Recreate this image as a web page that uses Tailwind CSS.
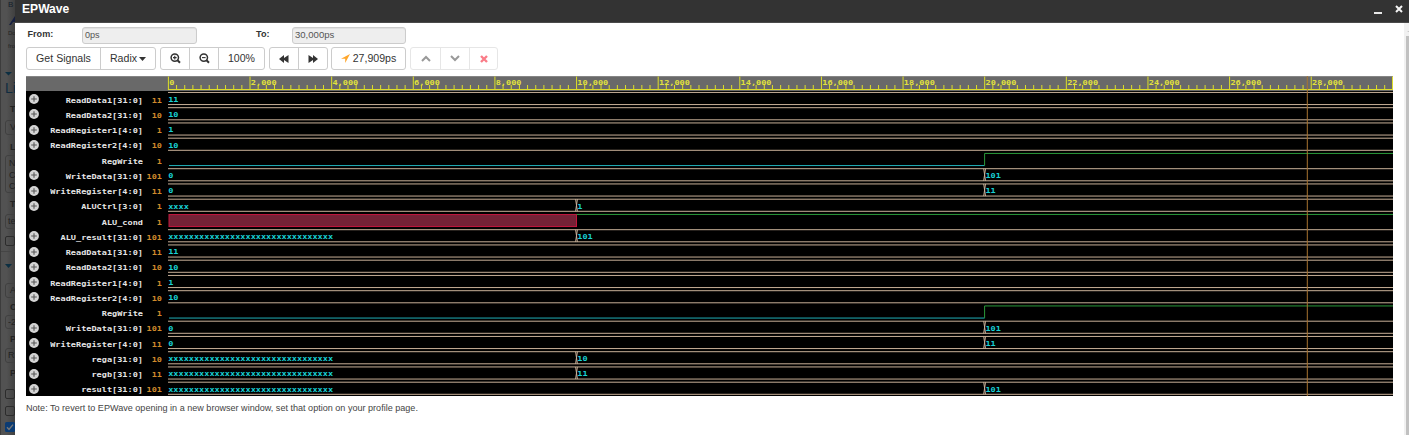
<!DOCTYPE html>
<html lang="en">
<head>
<meta charset="utf-8">
<title>EPWave</title>
<script src="https://cdn.jsdelivr.net/npm/@tailwindcss/browser@4"></script>
</head>
<body class="w-[1409px] h-[435px] overflow-hidden bg-white flex font-['Liberation_Sans',sans-serif] text-[#333]">

<!-- dimmed page behind the dialog -->
<aside class="w-[15px] h-[435px] shrink-0 overflow-hidden bg-linear-to-r from-[#525252] from-40% to-[#404040] border-l border-[#3c3c3c] text-[9px] leading-none text-[#222] whitespace-nowrap">
  <div class="h-[12px] pl-[7px] pt-px text-[8px] text-[#14202c]">B</div>
  <svg class="block ml-[8px] mt-[3px]" width="8" height="12"><path d="M0 10 6 1 9 1 9 7 4 7 2 10z" fill="#161f40"/></svg>
  <div class="h-[12px] pl-[7px] pt-[3px] text-[6px]">Do</div>
  <div class="h-[32px] pl-[7px] pt-[4px] text-[6px]">fro</div>
  <svg class="block ml-[4px]" width="8" height="5"><path d="M0 1H7L3.5 4.5z" fill="#0c2f42"/></svg>
  <div class="h-[28px] pl-[4px] pt-[5px] text-[14px] text-[#102c40]">Li</div>
  <div class="h-[16px] pl-[9px] pt-px font-bold">T</div>
  <div class="h-[15px] ml-[4px] w-[20px] rounded-[3px] border border-[#404040] pl-[4px] pt-[2px]">V</div>
  <div class="h-[20px] pl-[9px] pt-[8px] font-bold">L</div>
  <div class="h-[38px] ml-[4px] w-[20px] rounded-[3px] border border-[#404040] pl-[3px] pt-[2px] leading-[11.5px]">N<br>C<br>C</div>
  <div class="h-[21px] pl-[9px] pt-[7px] font-bold">T</div>
  <div class="h-[15px] ml-[4px] w-[20px] rounded-[3px] border border-[#404040] pl-[2px] pt-[2px]">te</div>
  <div class="mt-[7px] ml-[4px] size-[10px] rounded-[2px] border border-[#2c2c2c]"></div>
  <div class="mt-[5px] h-[13px] border-t border-[#454545]"></div>
  <svg class="block ml-[4px]" width="8" height="5"><path d="M0 0H7L3.5 4z" fill="#0c2f42"/></svg>
  <div class="mt-[14px] h-[15px] ml-[4px] w-[20px] rounded-[3px] border border-[#404040] pl-[4px] pt-[2px]">A</div>
  <div class="h-[17px] pl-[9px] pt-[5px] font-bold">C</div>
  <div class="h-[14px] ml-[4px] w-[20px] rounded-[3px] border border-[#404040] pl-[2px] pt-[2px]">-2</div>
  <div class="h-[19px] pl-[9px] pt-[6px] font-bold">P</div>
  <div class="h-[15px] ml-[4px] w-[20px] rounded-[3px] border border-[#404040] pl-[2px] pt-[2px]">R</div>
  <div class="h-[26px] pl-[9px] pt-[6px] font-bold">P</div>
  <div class="ml-[4px] size-[10px] rounded-[2px] border border-[#2c2c2c]"></div>
  <div class="mt-[7px] ml-[4px] size-[10px] rounded-[2px] border border-[#2c2c2c]"></div>
  <svg class="block mt-[6px] ml-[4px]" width="10" height="10"><rect width="10" height="10" rx="1.5" fill="#0b3b73"/><path d="M2 5.2 4 7.4 8 2.6" stroke="#777" stroke-width="1.4" fill="none"/></svg>
</aside>

<section class="w-[1394px] h-[435px] shrink-0 flex flex-col">
  <header class="h-[23px] shrink-0 bg-[#333] border-b border-[#4a4a4a] flex items-start justify-between pl-[7px] pr-[6px] text-white">
    <h1 class="text-[12.1px] font-bold leading-[18px]">EPWave</h1>
    <div class="flex gap-[13px]">
      <svg width="8" height="15"><path d="M0 13H8" stroke="#e8e8e8" stroke-width="2"/></svg>
      <svg width="8" height="15"><path d="M1 6 7 12M7 6 1 12" stroke="#f4f4f4" stroke-width="2"/></svg>
    </div>
  </header>

  <div class="flex flex-1 min-h-0">
    <main class="flex-1 pl-[11px] pt-[4px]">
      <div class="flex items-center h-[16px] text-[9.1px]">
        <label class="w-[56px] pl-[1.5px] font-bold">From:</label>
        <div class="w-[115px] h-[17px] rounded-[3px] border border-[#ccc] bg-[#eee] shadow-[inset_0_1px_1px_#0001] pl-[2px] leading-[15px] text-[#555]">0ps</div>
        <label class="ml-[59px] w-[36px] font-bold">To:</label>
        <div class="w-[114px] h-[17px] rounded-[3px] border border-[#ccc] bg-[#eee] shadow-[inset_0_1px_1px_#0001] pl-[2px] leading-[15px] text-[#555]"><span class="inline-block origin-left scale-x-105">30,000ps</span></div>
      </div>

      <div class="mt-[4px] flex h-[23px] text-[10.6px] leading-[21px]">
        <div class="flex w-[130px] rounded-[3px] border border-[#ccc] divide-x divide-[#ccc]">
          <div class="w-[74px] text-center"><span class="inline-block scale-y-110">Get Signals</span></div>
          <div class="flex-1 flex items-center justify-center gap-[2px]"><span class="inline-block scale-y-110">Radix</span><svg width="7" height="4"><path d="M0 0H7L3.5 4z" fill="#333"/></svg></div>
        </div>
        <div class="ml-[4px] flex w-[105px] rounded-[3px] border border-[#ccc] divide-x divide-[#ccc]">
          <div class="w-[29px] flex items-center justify-center"><svg width="11" height="11"><circle cx="4.8" cy="4.6" r="3.7" fill="none" stroke="#333" stroke-width="1.5"/><path d="M7.5 7.3 10 9.8" stroke="#333" stroke-width="2"/><path d="M3 4.6H6.6M4.8 2.8V6.4" stroke="#333" stroke-width="1.1"/></svg></div>
          <div class="w-[29px] flex items-center justify-center"><svg width="11" height="11"><circle cx="4.8" cy="4.6" r="3.7" fill="none" stroke="#333" stroke-width="1.5"/><path d="M7.5 7.3 10 9.8" stroke="#333" stroke-width="2"/><path d="M3 4.6H6.6" stroke="#333" stroke-width="1.1"/></svg></div>
          <div class="flex-1 text-center"><span class="inline-block scale-y-110">100%</span></div>
        </div>
        <div class="ml-[4px] flex w-[59px] rounded-[3px] border border-[#ccc] divide-x divide-[#ccc]">
          <div class="flex-1 flex items-center justify-center"><svg width="10" height="8"><path d="M0 4 5 0V3L9.5 0V8L5 5V8z" fill="#333"/></svg></div>
          <div class="flex-1 flex items-center justify-center"><svg width="10" height="8"><path d="M10 4 5 0V3L.5 0V8L5 5V8z" fill="#333"/></svg></div>
        </div>
        <div class="ml-[3px] flex w-[75px] items-center justify-center gap-[3px] rounded-[3px] border border-[#ccc]"><svg width="9" height="9"><path d="M9 0 0 4.8H4.2V9z" fill="#ffa62b"/></svg><span class="inline-block scale-y-110">27,909ps</span></div>
        <div class="ml-[4px] flex w-[88px] rounded-[3px] border border-[#e6e6e6] divide-x divide-[#e6e6e6]">
          <div class="w-[30px] flex items-center justify-center"><svg width="10" height="7"><path d="M1 6 5 2 9 6" stroke="#999" stroke-width="2" fill="none"/></svg></div>
          <div class="w-[29px] flex items-center justify-center"><svg width="10" height="7"><path d="M1 1 5 5 9 1" stroke="#999" stroke-width="2" fill="none"/></svg></div>
          <div class="flex-1 flex items-center justify-center"><svg width="8" height="8"><path d="M1 1 7 7M7 1 1 7" stroke="#fa7c88" stroke-width="2.4"/></svg></div>
        </div>
      </div>

      <div class="mt-[6px] w-[1367px] h-[320px] bg-black flex flex-col relative">
        <div class="h-[15px] shrink-0 bg-[#696969] border-t border-[#858585]"></div>
        <div id="names" class="w-[140px] pt-[0.4px] font-['DejaVu_Sans_Mono',monospace] text-[8.57px] font-bold"></div>
        <svg id="waves" class="absolute left-[140px] top-0 font-['DejaVu_Sans_Mono',monospace] text-[8.57px] font-bold" width="1227" height="320" viewBox="166 76 1227 320"></svg>
      </div>

      <p class="mt-[6px] text-[9.07px] leading-[13px] text-[#444]">Note: To revert to EPWave opening in a new browser window, set that option on your profile page.</p>
    </main>
    <div class="w-[5px] bg-[#f1f1f1] pl-[1.5px] pt-[7px] shrink-0">
      <svg class="block" width="4" height="6"><path d="M1 2H4V1z" fill="#aaa"/></svg>
      <div class="h-[420px] bg-[#c1c1c1]"></div>
    </div>
  </div>
</section>

<script>
// Each signal: name, value at the cursor, list of [time in ns, value]; 'bit' marks single-wire signals.
const signals = [
  ['ReadData1[31:0]', '11', [[0, '11']]],
  ['ReadData2[31:0]', '10', [[0, '10']]],
  ['ReadRegister1[4:0]', '1', [[0, '1']]],
  ['ReadRegister2[4:0]', '10', [[0, '10']]],
  ['RegWrite', '1', [[0, 0], [20, 1]], 'bit'],
  ['WriteData[31:0]', '101', [[0, '0'], [20, '101']]],
  ['WriteRegister[4:0]', '11', [[0, '0'], [20, '11']]],
  ['ALUCtrl[3:0]', '1', [[0, 'xxxx'], [10, '1']]],
  ['ALU_cond', '1', [[0, 'x'], [10, 1]], 'bit'],
  ['ALU_result[31:0]', '101', [[0, 'x'.repeat(32)], [10, '101']]],
  ['ReadData1[31:0]', '11', [[0, '11']]],
  ['ReadData2[31:0]', '10', [[0, '10']]],
  ['ReadRegister1[4:0]', '1', [[0, '1']]],
  ['ReadRegister2[4:0]', '10', [[0, '10']]],
  ['RegWrite', '1', [[0, 0], [20, 1]], 'bit'],
  ['WriteData[31:0]', '101', [[0, '0'], [20, '101']]],
  ['WriteRegister[4:0]', '11', [[0, '0'], [20, '11']]],
  ['rega[31:0]', '10', [[0, 'x'.repeat(32)], [10, '10']]],
  ['regb[31:0]', '11', [[0, 'x'.repeat(32)], [10, '11']]],
  ['result[31:0]', '101', [[0, 'x'.repeat(32)], [20, '101']]]
];
const X0 = 168.4, NS = 40.81, PITCH = 15.25, END = 1393;
const x = t => X0 + t * NS;
// Text squeezed vertically to the waveform font's low, wide proportions.
const label = (tx, ty, fill, str) => `<text transform="translate(${tx} ${ty}) scale(1 .9)" fill="${fill}">${str}</text>`;

document.getElementById('names').innerHTML = signals.map(s => `
  <div class="h-[15.25px] flex items-center leading-none whitespace-nowrap">
    <span class="w-[13px] pl-[3px]">${s[3] ? '' : '<svg class="block" width="10" height="10"><circle cx="5" cy="5" r="4.9" fill="#d4d4d4"/><path d="M5 2.2V7.8M2.2 5H7.8" stroke="#555" stroke-width="1.1"/></svg>'}</span>
    <span class="w-[104px] pt-[2px] text-right text-[#e6e6e6] scale-y-90">${s[0]}</span>
    <span class="w-[19px] pt-[2px] text-right text-[#d08a2c] scale-y-90">${s[1]}</span>
  </div>`).join('');

let g = '';
for (let i = 0; i <= 150; i++) {
  const major = i % 10 === 0, tx = Math.min(X0 + i * 8.163, 1392.5);
  g += `<path d="M${tx} ${major ? 76.5 : 85}V90" stroke="#dede28"/>`;
  if (major && i < 150) g += label(tx + .8, 85.4, '#e2e23c', (i * 200).toLocaleString('en-US'));
}
g += '<path d="M168 89.5H1393" stroke="#dede28"/>';
signals.forEach((s, r) => {
  const t = 92.45 + r * PITCH, b = t + 12.1;
  if (s[3]) {
    s[2].forEach(([at, v], i) => {
      const a = x(at), z = s[2][i + 1] ? x(s[2][i + 1][0]) : END;
      if (v === 'x') g += `<rect x="${a + .6}" y="${t + .1}" width="${z - a - .6}" height="12" fill="#742236" stroke="#c4183e"/>`;
      else if (v === 0) g += `<path d="M${a + .6} ${b}H${z}" stroke="#20b0b8"/>`;
      else g += `<path d="M${s[0] === 'RegWrite' ? `${a} ${b}V${t}` : `${a} ${t}`}H${z}" stroke="#2a9a3a" fill="none"/>`;
    });
  } else {
    g += `<path d="M168 ${t}H${END}M168 ${b}H${END}" stroke="#c8b098"/>`;
    s[2].forEach(([at, v], i) => {
      const a = x(at);
      if (i) g += `<path d="M${a - .9} ${t}L${a + .9} ${b}M${a + .9} ${t}L${a - .9} ${b}" stroke="#c8b098"/>`;
      g += label(a + (i ? .8 : -.2), t + 9.5, '#18d0d4', v);
    });
  }
});
g += '<path d="M1307.3 76V396" stroke="#a87430"/>';
document.getElementById('waves').innerHTML = g;
</script>
</body>
</html>
